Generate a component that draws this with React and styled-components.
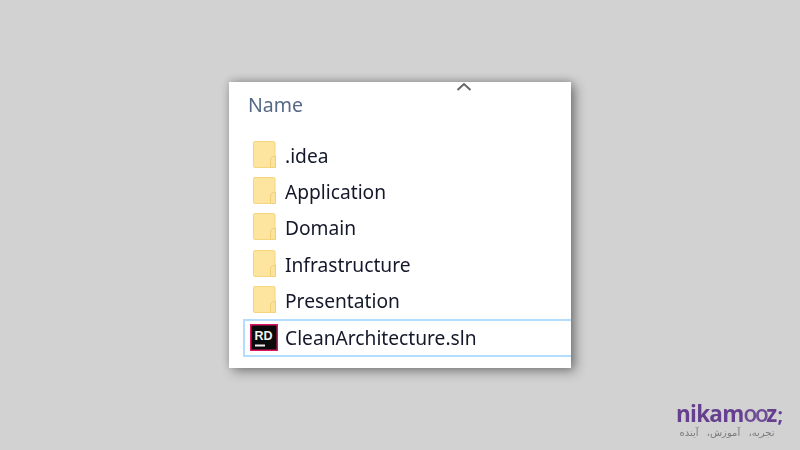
import styled, { createGlobalStyle } from "styled-components";

const Global = createGlobalStyle`
    html, body {
        margin: 0;
        background: #d2d2d2;
    }
`

const Page = styled.div`
    position: relative;
    width: 800px;
    height: 450px;
    overflow: hidden;
    box-sizing: border-box;
    padding: 82px 0 0 229px;
    background: #d2d2d2;
    font-family: "Noto Sans", "Open Sans", sans-serif;
`

const Panel = styled.div`
    position: relative;
    width: 342px;
    height: 286px;
    box-sizing: border-box;
    padding: 9px 0 0 15px;
    background: #fff;
    box-shadow: 4px 3px 11px rgba(0, 0, 0, .42), 0 -2px 7px rgba(0, 0, 0, .14);
`

const SortArrow = styled.svg`
    position: absolute;
    left: 227px;
    top: 0;
    filter: blur(.5px);
`

const Header = styled.div`
    height: 27px;
    padding-left: 4px;
    font-size: 19.5px;
    line-height: 27px;
    color: #566888;
    filter: blur(.4px);
`

const List = styled.div`
    display: flex;
    flex-direction: column;
    margin-top: 19px;
`

const Row = styled.div`
    display: flex;
    align-items: center;
    box-sizing: border-box;
    height: 36.4px;
    padding-left: ${p => p.$selected ? "5px" : "9px"};
    gap: ${p => p.$selected ? "7px" : "9px"};
    font-size: 19.2px;
    color: #14182a;
    ${p => p.$selected && `
        border: solid #b4dcfc;
        border-width: 2px 0 2px 2px;
        height: 38px;
        margin-left: -1px;
    `}
`

const RowLabel = styled.span`
    filter: blur(.4px);
    white-space: nowrap;
`

const FolderSvg = styled.svg`
    margin-top: -2px;
`

const FolderIcon = () => (
    <FolderSvg width="23" height="27" viewBox="0 0 23 27">
        <rect x=".5" y=".5" width="21.5" height="26" rx="1.5" fill="#fde5a0" stroke="#f4d67f" />
        <path d="M17.5 26.5V19q0-2.5 2.2-3.2l2.8-.8v11.5z" fill="#fde39a" stroke="#f1d077" />
    </FolderSvg>
)

const RiderIcon = () => (
    <svg width="28" height="27" viewBox="0 0 28 27">
        <rect width="28" height="27" fill="#d9175f" />
        <rect x="1.5" y="1.5" width="25" height="24" fill="#0a0a0a" />
        <text x="4.5" y="15.5" fontFamily="Liberation Sans" fontWeight="700" fontSize="12.5" fill="#f2f2f2">RD</text>
        <rect x="5" y="20.5" width="10" height="2" fill="#f2f2f2" />
    </svg>
)

const LogoBox = styled.div`
    position: absolute;
    left: 676px;
    top: 401px;
    width: 112px;
    filter: blur(.4px);
`

const LogoWord = styled.div`
    font-family: "Open Sans", sans-serif;
    font-weight: 700;
    font-size: 22.5px;
    line-height: 26px;
    letter-spacing: -.75px;
    color: #66408f;
    white-space: nowrap;
`

const LogoLoop = styled.span`
    font-weight: 600;
    letter-spacing: -2.4px;
    color: #6f4c97;
`

const LogoTail = styled.span`
    margin-left: 1px;
    font-size: 19px;
`

const LogoTag = styled.div`
    font-family: "DejaVu Sans", sans-serif;
    font-size: 10px;
    line-height: 9px;
    word-spacing: 5px;
    color: #7c7c7c;
    direction: rtl;
    text-align: center;
    width: 102px;
    white-space: nowrap;
`

const folders = [".idea", "Application", "Domain", "Infrastructure", "Presentation"]

const App = () => {
    return (
        <Page>
            <Global />
            <Panel>
                <SortArrow width="16" height="9" viewBox="0 0 16 9">
                    <path d="M1.5 8 8 2l6.5 6" fill="none" stroke="#666" strokeWidth="2" />
                </SortArrow>
                <Header>Name</Header>
                <List>
                    {folders.map(name => (
                        <Row key={name}>
                            <FolderIcon />
                            <RowLabel>{name}</RowLabel>
                        </Row>
                    ))}
                    <Row $selected>
                        <RiderIcon />
                        <RowLabel>CleanArchitecture.sln</RowLabel>
                    </Row>
                </List>
            </Panel>
            <LogoBox>
                <LogoWord>nikam<LogoLoop>oo</LogoLoop>z<LogoTail>;</LogoTail></LogoWord>
                <LogoTag>تجربه، آموزش، آینده</LogoTag>
            </LogoBox>
        </Page>
    )
}

export default App
